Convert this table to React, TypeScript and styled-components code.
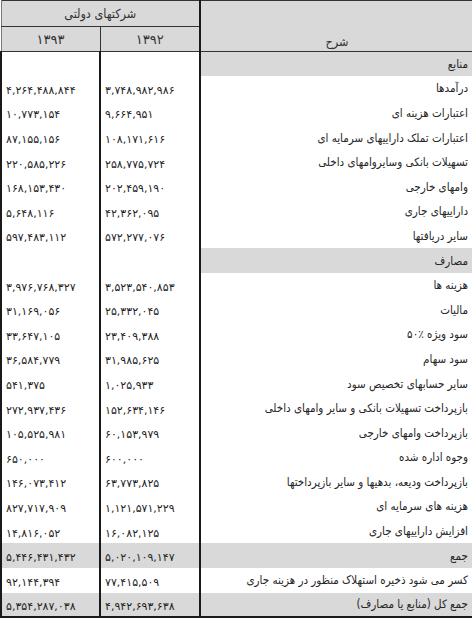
import styled, { createGlobalStyle } from "styled-components";

const GlobalStyle = createGlobalStyle`
  html, body {
    margin: 0;
    padding: 0;
    background: #ffffff;
  }
  body {
    font-family: "DejaVu Sans", sans-serif;
    color: #222;
  }
`;

type Tone = "plain" | "section" | "total";

type Row = {
  label: string;
  y1392?: string;
  y1393?: string;
  tone?: Tone;
};

const rows: Row[] = [
  { label: "منابع", tone: "section" },
  { label: "درآمدها", y1392: "۳,۷۴۸,۹۸۲,۹۸۶", y1393: "۴,۲۶۴,۴۸۸,۸۴۴" },
  { label: "اعتبارات هزینه ای", y1392: "۹,۶۶۴,۹۵۱", y1393: "۱۰,۷۷۳,۱۵۴" },
  { label: "اعتبارات تملک داراییهای سرمایه ای", y1392: "۱۰۸,۱۷۱,۶۱۶", y1393: "۸۷,۱۵۵,۱۵۶" },
  { label: "تسهیلات بانکی وسایروامهای داخلی", y1392: "۲۵۸,۷۷۵,۷۲۴", y1393: "۲۲۰,۵۸۵,۲۲۶" },
  { label: "وامهای خارجی", y1392: "۲۰۲,۴۵۹,۱۹۰", y1393: "۱۶۸,۱۵۳,۴۳۰" },
  { label: "داراییهای جاری", y1392: "۴۲,۳۶۲,۰۹۵", y1393: "۵,۶۴۸,۱۱۶" },
  { label: "سایر دریافتها", y1392: "۵۷۲,۲۷۷,۰۷۶", y1393: "۵۹۷,۴۸۳,۱۱۲" },
  { label: "مصارف", tone: "section" },
  { label: "هزینه ها", y1392: "۳,۵۲۳,۵۴۰,۸۵۳", y1393: "۳,۹۷۶,۷۶۸,۳۲۷" },
  { label: "مالیات", y1392: "۲۵,۳۳۲,۰۴۵", y1393: "۳۱,۱۶۹,۰۵۶" },
  { label: "سود ویژه ٪۵۰", y1392: "۲۳,۴۰۹,۳۸۸", y1393: "۳۳,۶۴۷,۱۰۵" },
  { label: "سود سهام", y1392: "۳۱,۹۸۵,۶۲۵", y1393: "۳۶,۵۸۴,۷۷۹" },
  { label: "سایر حسابهای تخصیص سود", y1392: "۱,۰۲۵,۹۳۳", y1393: "۵۴۱,۳۷۵" },
  { label: "بازپرداخت تسهیلات بانکی و سایر وامهای داخلی", y1392: "۱۵۲,۶۳۴,۱۴۶", y1393: "۲۷۲,۹۳۷,۴۳۶" },
  { label: "بازپرداخت  وامهای خارجی", y1392: "۶۰,۱۵۳,۹۷۹", y1393: "۱۰۵,۵۲۵,۹۸۱" },
  { label: "وجوه اداره شده", y1392: "۶۰۰,۰۰۰", y1393: "۶۵۰,۰۰۰" },
  { label: "بازپرداخت ودیعه، بدهیها و سایر بازپرداختها", y1392: "۶۳,۷۷۳,۸۲۵", y1393: "۱۴۶,۰۷۳,۴۱۲" },
  { label: "هزینه های سرمایه ای", y1392: "۱,۱۲۱,۵۷۱,۲۲۹", y1393: "۸۲۷,۷۱۷,۹۰۹" },
  { label: "افزایش داراییهای جاری", y1392: "۱۶,۰۸۲,۱۲۵", y1393: "۱۴,۸۱۶,۰۵۲" },
  { label: "جمع", y1392: "۵,۰۲۰,۱۰۹,۱۴۷", y1393: "۵,۴۴۶,۴۳۱,۴۳۲", tone: "total" },
  { label: "کسر می شود ذخیره استهلاک منظور در هزینه جاری", y1392: "۷۷,۴۱۵,۵۰۹", y1393: "۹۲,۱۴۴,۳۹۴" },
  { label: "جمع کل (منابع یا مصارف)", y1392: "۴,۹۴۲,۶۹۳,۶۳۸", y1393: "۵,۳۵۴,۲۸۷,۰۳۸", tone: "total" },
];

const GRAY = "#d9d9d9";
const RULE = "#1a1a1a";

const Table = styled.table`
  direction: rtl;
  width: 472px;
  table-layout: fixed;
  border-collapse: collapse;
  border-spacing: 0;
  font-family: "DejaVu Sans", sans-serif;
`;

const HeadCell = styled.th<{ $edge?: boolean; $align?: "top" | "bottom" }>`
  background: ${GRAY};
  color: #333;
  font-weight: normal;
  font-family: "DejaVu Sans Condensed", "DejaVu Sans", sans-serif;
  font-size: 12.5px;
  text-align: center;
  padding: 0;
  vertical-align: ${(p) => (p.$align === "bottom" ? "bottom" : "middle")};
  border-top: 1.5px solid #333;
  border-bottom: 1.5px solid #333;
  border-left: 1.5px solid ${(p) => (p.$edge ? "#777" : "#333")};
`;

const DescHead = styled(HeadCell)`
  border-left: 2px solid ${RULE};
  padding-bottom: 2px;
`;

const Year = styled.span`
  font-family: "DejaVu Sans", sans-serif;
  font-size: 13px;
  letter-spacing: 0.3px;
`;

const TitleRow = styled.tr`
  height: 26px;
`;

const YearRow = styled.tr`
  height: 25px;
`;

const BodyRow = styled.tr<{ $last?: boolean }>`
  height: 24.6px;
  & > td {
    border-bottom: ${(p) => (p.$last ? `2px solid ${RULE}` : "none")};
  }
`;

const LabelCell = styled.td<{ $tone: Tone }>`
  background: ${(p) => (p.$tone === "plain" ? "#fff" : GRAY)};
  font-family: "DejaVu Sans Condensed", "DejaVu Sans", sans-serif;
  font-size: 11.5px;
  color: #262626;
  text-align: right;
  padding: 0 5px 0 0;
  white-space: nowrap;
  overflow: hidden;
`;

const NumCell = styled.td<{ $tone: Tone; $outer?: boolean }>`
  background: ${(p) => (p.$tone === "total" ? GRAY : "#fff")};
  border-left: 2px solid ${RULE};
  border-right: ${(p) => (p.$outer ? "none" : `2px solid ${RULE}`)};
  text-align: left;
  padding: 0 0 0 4px;
  white-space: nowrap;
`;

const Num = styled.span`
  direction: ltr;
  unicode-bidi: isolate;
  font-size: 11px;
  color: #1f1f1f;
  letter-spacing: 0.2px;
`;

export default function App() {
  return (
    <>
      <GlobalStyle />
      <Table>
        <colgroup>
          <col style={{ width: 273 }} />
          <col style={{ width: 100 }} />
          <col style={{ width: 99 }} />
        </colgroup>
        <thead>
          <TitleRow>
            <DescHead rowSpan={2} $align="bottom">
              شرح
            </DescHead>
            <HeadCell colSpan={2} $edge>
              شرکتهای دولتی
            </HeadCell>
          </TitleRow>
          <YearRow>
            <HeadCell>
              <Year>۱۳۹۲</Year>
            </HeadCell>
            <HeadCell $edge>
              <Year>۱۳۹۳</Year>
            </HeadCell>
          </YearRow>
        </thead>
        <tbody>
          {rows.map((r, i) => {
            const tone = r.tone ?? "plain";
            return (
              <BodyRow key={r.label} $last={i === rows.length - 1}>
                <LabelCell $tone={tone}>{r.label}</LabelCell>
                <NumCell $tone={tone}>
                  <Num>{r.y1392}</Num>
                </NumCell>
                <NumCell $tone={tone} $outer>
                  <Num>{r.y1393}</Num>
                </NumCell>
              </BodyRow>
            );
          })}
        </tbody>
      </Table>
    </>
  );
}
